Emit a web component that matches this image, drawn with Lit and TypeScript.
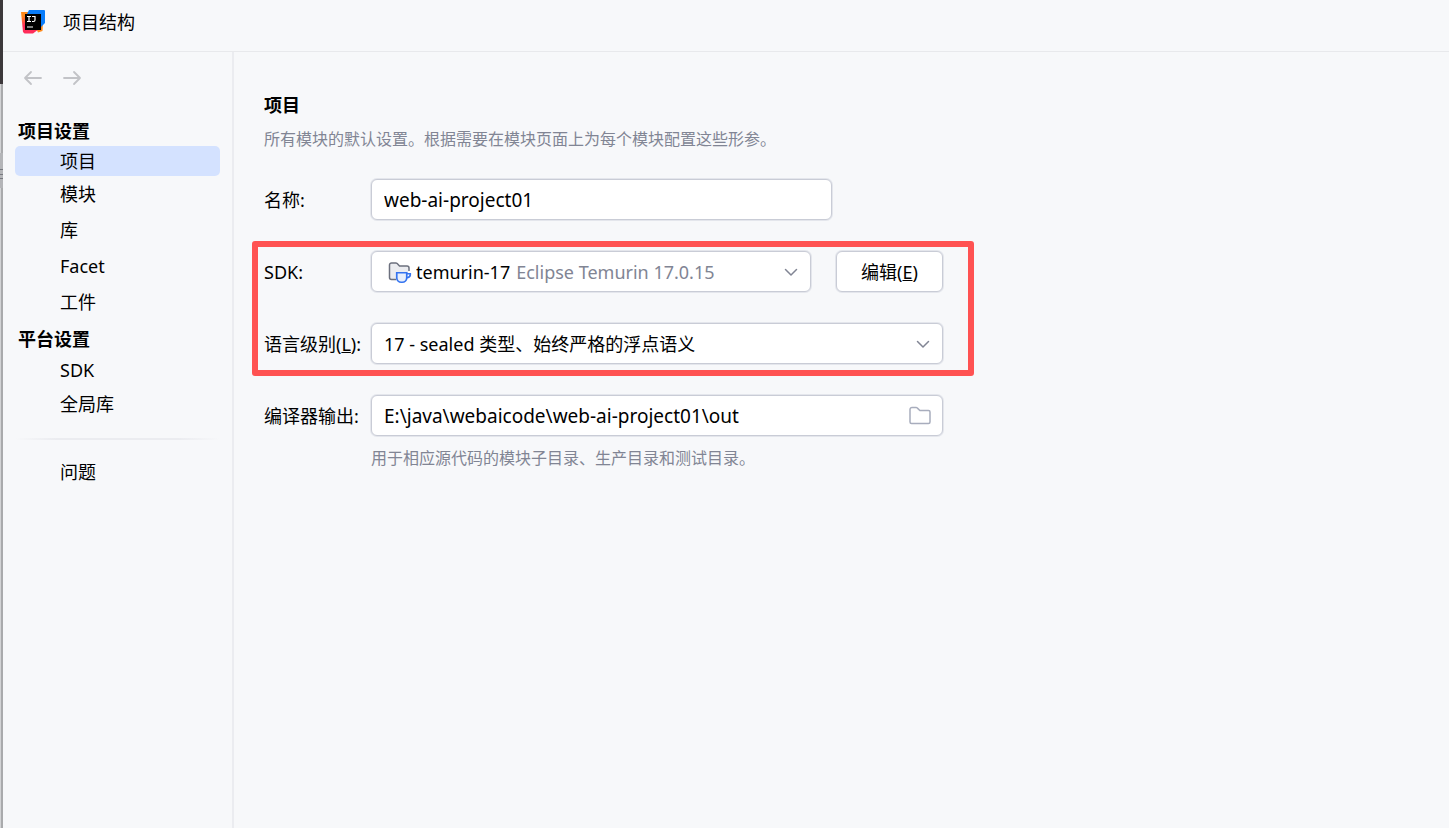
import { LitElement, html, css, svg } from "lit";
import { customElement, state } from "lit/decorators.js";

const chevron = html`<svg class="chevron" width="14" height="14" viewBox="0 0 14 14" aria-hidden="true">
  <path d="M1.5 4.5 7 10l5.5-5.5" fill="none" stroke="#818594" stroke-width="1.5" stroke-linecap="round" stroke-linejoin="round" />
</svg>`;

const arrow = (d: string) => html`<svg width="20" height="16" viewBox="0 0 20 16" aria-hidden="true">
  <path d=${d} fill="none" stroke="#c2c3c7" stroke-width="1.8" stroke-linecap="round" stroke-linejoin="round" />
</svg>`;

const folderShape = svg`<path d="M1 3.5A2 2 0 0 1 3 1.5h4a2 2 0 0 1 1.400.6l2.500 2.400h8.600a1.500 1.500 0 0 1 1.500 1.500v10a1.500 1.500 0 0 1-1.500 1.500H2.500a1.500 1.500 0 0 1-1.500-1.500z" />`;

@customElement("app-root")
export class AppRoot extends LitElement {
  @state() private page = "项目";

  static styles = css`
    :host {
      display: flex;
      min-height: 100vh;
      background: #f7f8fa;
      color: #000;
      font: 18px/24px "Noto Sans", "Noto Sans CJK SC", sans-serif;
    }
    * {
      box-sizing: border-box;
    }
    button, input, select {
      font: inherit;
      color: inherit;
      margin: 0;
    }
    .edge {
      flex: none;
      width: 3px;
      background:
        linear-gradient(
          #3c383b 84px,
          transparent 84px 153px,
          #b4b5b8 153px 169px,
          #77797f 169px 170px,
          #b4b5b8 170px 174px,
          #77797f 174px 175px,
          #b4b5b8 175px 178px,
          #77797f 178px 179px,
          #b4b5b8 179px 188px,
          transparent 188px
        ),
        linear-gradient(90deg, #d2d3d5 1px, #a9aaac 1px);
    }
    .window {
      flex: 1;
      display: flex;
      flex-direction: column;
      min-width: 0;
    }
    .titlebar {
      display: flex;
      align-items: center;
      gap: 18px;
      height: 52px;
      padding: 0 18px 8px;
      border-bottom: 1px solid #e8e9ec;
    }
    .titlebar h1 {
      margin: 0;
      font: inherit;
    }
    .logo {
      display: block;
    }
    .body {
      flex: 1;
      display: flex;
    }
    .sidebar {
      flex: none;
      width: 231px;
      padding: 14px 12px;
      border-right: 2px solid #ebecf0;
    }
    .history {
      display: flex;
      gap: 19px;
      padding: 0 8px;
    }
    .history button {
      display: flex;
      align-items: center;
      width: 20px;
      height: 24px;
      padding: 0;
      border: 0;
      background: none;
    }
    .sidebar h2 {
      margin: 0;
      padding: 0 3px;
      font-size: 18px;
      line-height: 30px;
      font-weight: 700;
    }
    .history + h2 {
      margin-top: 26px;
    }
    .sidebar ul + h2 {
      margin-top: 4px;
    }
    .sidebar ul {
      list-style: none;
      margin: 0;
      padding: 0;
    }
    .sidebar a {
      display: flex;
      align-items: center;
      height: 36px;
      padding-left: 45px;
      border-radius: 5px;
      color: inherit;
      text-decoration: none;
    }
    .sidebar a.short {
      height: 32px;
    }
    .sidebar a.selected {
      height: 30px;
      background: #d4e2ff;
    }
    .sidebar hr {
      height: 2px;
      margin: 16px 0;
      border: 0;
      background: linear-gradient(90deg, transparent, #ebecf0 20%, #ebecf0 80%, transparent);
    }
    main {
      flex: 1;
      min-width: 0;
      padding: 41px 30px;
    }
    main h2 {
      margin: 0 0 10px;
      font-size: 18px;
      line-height: 24px;
    }
    .hint {
      margin: 0;
      font-size: 16px;
      line-height: 24px;
      color: #818594;
    }
    form {
      display: grid;
      gap: 30px;
      max-width: 679px;
      margin-top: 28px;
    }
    .row {
      display: grid;
      grid-template-columns: 107px 1fr;
      align-items: center;
      white-space: nowrap;
    }
    .controls {
      display: flex;
      gap: 25px;
    }
    .field,
    .edit {
      height: 41px;
      border: 1px solid #c9ccd6;
      border-radius: 6px;
      box-shadow: 0 0 0 1px #e4e6ec;
      background: #fff;
    }
    .field {
      flex: 1;
      display: flex;
      align-items: center;
      min-width: 0;
      padding: 0 11px 0 12px;
    }
    .field.name {
      margin-right: 111px;
    }
    .field input,
    .field select {
      flex: 1;
      min-width: 0;
      height: 36px;
      padding: 0;
      border: 0;
      outline: 0;
      background: transparent;
      appearance: none;
    }
    .field input {
      font-size: 19px;
    }
    .field.sdk select {
      flex: none;
      field-sizing: content;
      margin: 0 6px 0 4px;
    }
    .field.sdk {
      padding-left: 16px;
    }
    .field .vendor {
      flex: 1;
      color: #818594;
    }
    .chevron {
      flex: none;
      margin-right: 1px;
    }
    .edit {
      width: 107px;
      padding: 0;
    }
    .browse {
      display: flex;
      padding: 0;
      border: 0;
      background: none;
    }
    .marked {
      position: relative;
      display: grid;
      gap: 31px;
    }
    .marked::after {
      content: "";
      position: absolute;
      inset: -10px -31px -12px -12px;
      border: 6px solid #ff5252;
      border-radius: 3px;
      pointer-events: none;
    }
    .marked,
    .marked + .row {
      margin-top: 1px;
    }
    .below {
      margin: -20px 0 0 107px;
    }
  `;

  private link(name: string, short = false) {
    const cls = name === this.page ? "selected" : short ? "short" : "";
    return html`<li><a class=${cls} href="#" @click=${(e: Event) => { e.preventDefault(); this.page = name; }}>${name}</a></li>`;
  }

  render() {
    return html`
      <div class="edge"></div>
      <div class="window">
        <header class="titlebar">
          <svg class="logo" width="24" height="24" viewBox="0 0 24 24" aria-hidden="true">
            <defs>
              <linearGradient id="warm" x1="0" y1="0" x2="0.4" y2="1">
                <stop offset="0.2" stop-color="#ff8a1c" />
                <stop offset="0.6" stop-color="#ff2d5a" />
              </linearGradient>
            </defs>
            <path d="M12 12h10l-.500 9-4.500 1.500z" fill="#ff8a1c" />
            <path d="M0 2h8L18 19l-6 4.500H3.500L2 22z" fill="url(#warm)" />
            <path d="M8 0h15q1 0 1 1v12l-4 4L5 6z" fill="#087cfa" />
            <path d="M4 4h16v16H4z" />
            <path d="M6 6.500h4M8 6.500v5M6 11.500h4M11 6.500h3v3.500q0 1.500-1.500 1.500h-1.500M6 17h6" fill="none" stroke="#fff" stroke-width="1.200" />
          </svg>
          <h1>项目结构</h1>
        </header>
        <div class="body">
          <nav class="sidebar" aria-label="项目结构">
            <div class="history">
              <button type="button" aria-label="后退">${arrow("M18 8H2M8 2 2 8l6 6")}</button>
              <button type="button" aria-label="前进">${arrow("M2 8h16M12 2l6 6-6 6")}</button>
            </div>
            <h2>项目设置</h2>
            <ul>
              ${this.link("项目", true)} ${this.link("模块")} ${this.link("库")} ${this.link("Facet")} ${this.link("工件")}
            </ul>
            <h2>平台设置</h2>
            <ul>
              ${this.link("SDK", true)} ${this.link("全局库")}
            </ul>
            <hr />
            <ul>
              ${this.link("问题", true)}
            </ul>
          </nav>
          <main>
            <h2>项目</h2>
            <p class="hint">所有模块的默认设置。根据需要在模块页面上为每个模块配置这些形参。</p>
            <form @submit=${(e: Event) => e.preventDefault()}>
              <div class="row">
                <label for="name">名称:</label>
                <div class="field name"><input id="name" type="text" value="web-ai-project01" spellcheck="false" /></div>
              </div>
              <div class="marked">
                <div class="row">
                  <label for="sdk">SDK:</label>
                  <div class="controls">
                    <div class="field sdk">
                      <svg width="24" height="24" viewBox="0 0 24 24" aria-hidden="true">
                        <path d="M8 19.500H3.500a2 2 0 0 1-2-2V5a2 2 0 0 1 2-2h4.300a2 2 0 0 1 1.400.600L11.500 6H19a2 2 0 0 1 2 2v3" fill="#ebecf0" stroke="#6c707e" stroke-width="1.500" />
                        <path d="M8.750 12.750h10v5a4.500 4.500 0 0 1-4.500 4.500h-1a4.500 4.500 0 0 1-4.500-4.500z" fill="#e7effd" stroke="#3574f0" stroke-width="1.700" />
                        <path d="M18.750 13.750h3.500v1.250a3 3 0 0 1-3.500 2.500" fill="none" stroke="#3574f0" stroke-width="1.700" />
                      </svg>
                      <select id="sdk"><option>temurin-17</option></select>
                      <span class="vendor">Eclipse Temurin 17.0.15</span>
                      ${chevron}
                    </div>
                    <button class="edit" type="button">编辑(<u>E</u>)</button>
                  </div>
                </div>
                <div class="row">
                  <label for="level">语言级别(<u>L</u>):</label>
                  <div class="field">
                    <select id="level"><option>17 - sealed 类型、始终严格的浮点语义</option></select>
                    ${chevron}
                  </div>
                </div>
              </div>
              <div class="row">
                <label for="output">编译器输出:</label>
                <div class="field">
                  <input id="output" type="text" value="E:\\java\\webaicode\\web-ai-project01\\out" spellcheck="false" />
                  <button class="browse" type="button" aria-label="浏览">
                    <svg width="22" height="19" viewBox="0 0 22 19" fill="none" stroke="#a8adbd" stroke-width="1.500" aria-hidden="true">${folderShape}</svg>
                  </button>
                </div>
              </div>
              <p class="hint below">用于相应源代码的模块子目录、生产目录和测试目录。</p>
            </form>
          </main>
        </div>
      </div>
    `;
  }
}
